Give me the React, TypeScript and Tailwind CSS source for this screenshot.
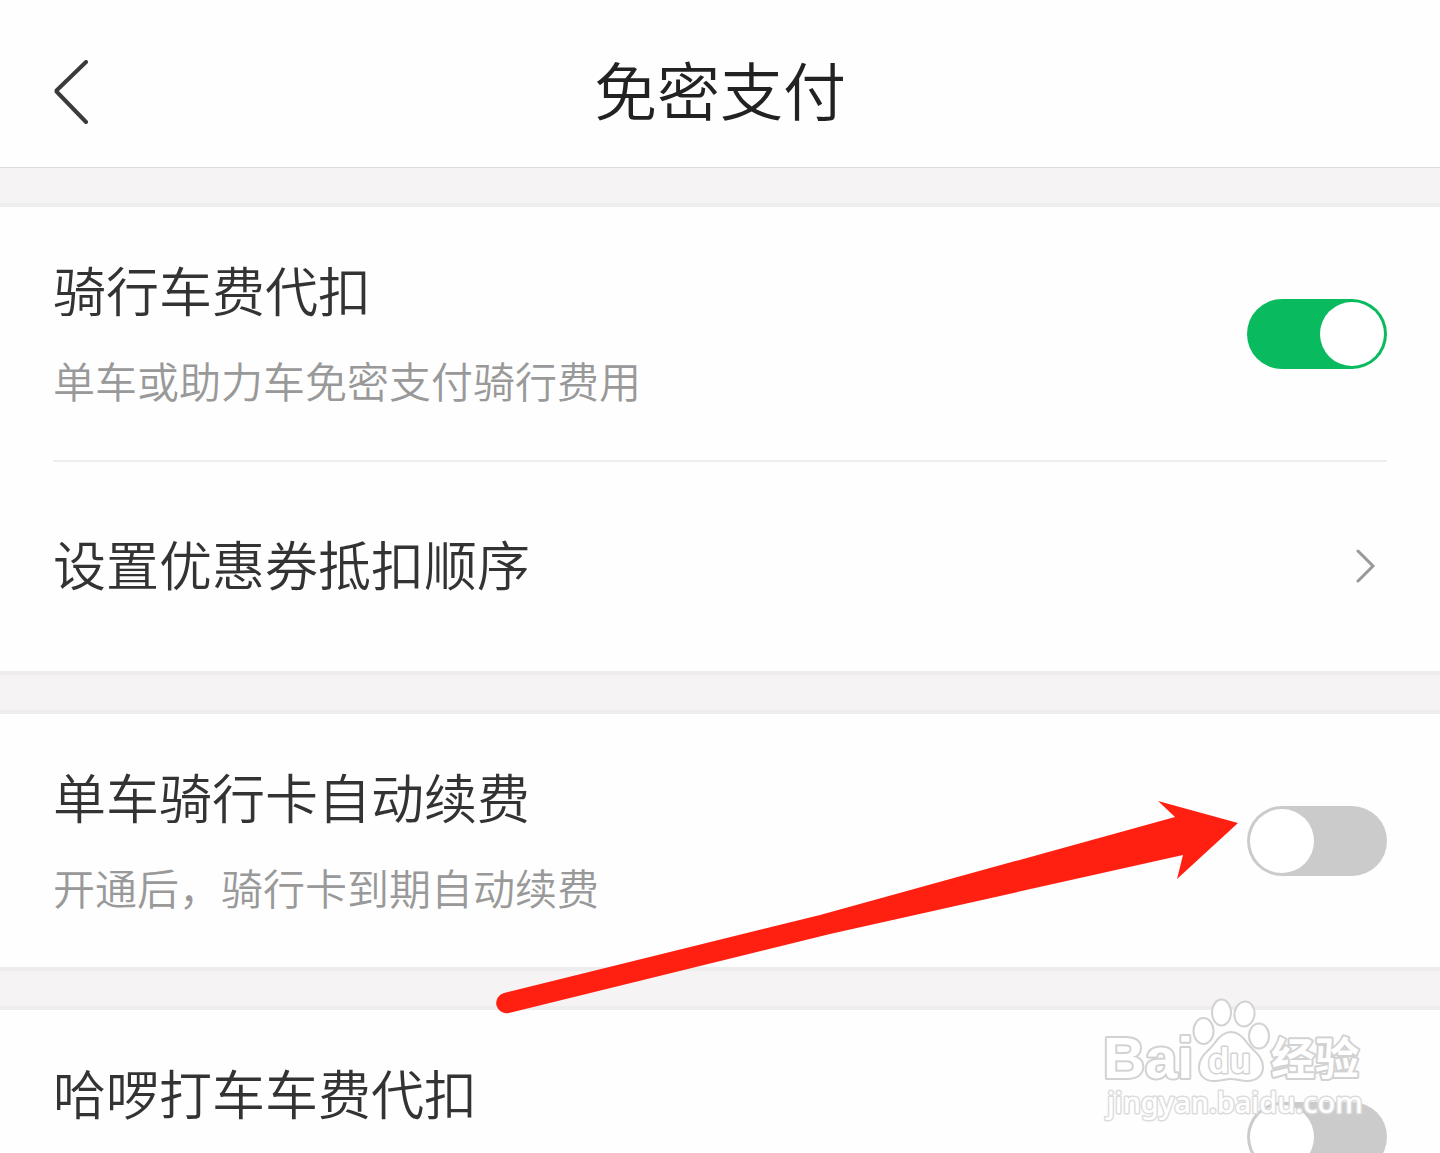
import { useState } from "react"

interface ToggleRowProps {
	id: string
	title: string
	description?: string
	defaultOn?: boolean
}

function ToggleRow({ id, title, description, defaultOn = false }: ToggleRowProps) {
	const [on, setOn] = useState(defaultOn)

	return (
		<div className="flex min-h-[253px] justify-between">
			<div className="flex flex-col gap-8 pt-[50px]">
				<label htmlFor={id} className="text-[53px] leading-[64px] text-[#333333]">
					{title}
				</label>
				{description && (
					<p id={`${id}-desc`} className="text-[42px] leading-[54px] text-[#999999]">
						{description}
					</p>
				)}
			</div>
			<input
				id={id}
				type="checkbox"
				role="switch"
				aria-describedby={description ? `${id}-desc` : undefined}
				checked={on}
				onChange={(e) => setOn(e.target.checked)}
				className="flex h-[70px] w-[140px] flex-shrink-0 cursor-pointer appearance-none items-center self-center rounded-full bg-[#cbcbcb] p-[3px] before:h-16 before:w-16 before:rounded-full before:bg-white before:content-[''] checked:justify-end checked:bg-[#09bb5e]"
			/>
		</div>
	)
}

function Divider() {
	return (
		<div className="h-[43px] flex-shrink-0 border-y-4 border-[#ededed] bg-[#f5f3f4]"></div>
	)
}

function PointerArrow() {
	return (
		<svg
			className="pointer-events-none absolute top-[800px] left-[496px] h-[216px] w-[744px]"
			viewBox="496 800 744 216"
			fill="#ff2012"
			aria-hidden="true"
		>
			<path d="M504 993 L820 915 L1175 817 L1158 801 L1238 823 L1177 879 L1183 855 L830 934 L509 1013 A10 10 0 0 1 504 993 Z" />
		</svg>
	)
}

function Watermark() {
	return (
		<svg
			className="pointer-events-none absolute top-[992px] right-[70px] h-[136px] w-[270px]"
			viewBox="1100 992 270 136"
			fill="#ffffff"
			stroke="#d2d2d2"
			strokeWidth="2"
			strokeLinejoin="round"
			role="img"
			aria-label="Baidu 经验"
		>
			<ellipse cx="1203.5" cy="1031" rx="10" ry="13" />
			<ellipse cx="1221.5" cy="1012.5" rx="9.5" ry="13" />
			<ellipse cx="1244.5" cy="1014" rx="10" ry="12.5" transform="rotate(8 1244.5 1014)" />
			<ellipse cx="1259" cy="1036" rx="10" ry="12.5" />
			<path d="M1231 1032 C1239 1032 1244 1038 1248 1044 C1253 1051 1263 1056 1263 1067 C1263 1077 1255 1081 1247 1081 C1241 1081 1237 1079 1231 1079 C1225 1079 1221 1081 1214 1081 C1205 1081 1199 1076 1199 1067 C1199 1056 1209 1051 1214 1044 C1218 1038 1223 1032 1231 1032 Z" />
			<g className="font-['Liberation_Sans',sans-serif] font-bold" paintOrder="stroke">
				<text x="1103" y="1078" fontSize="58" strokeWidth="4">
					Bai
				</text>
				<text x="1208" y="1073" fontSize="35" strokeWidth="3">
					du
				</text>
			</g>
			<text
				x="1271"
				y="1075"
				fontSize="44"
				strokeWidth="4"
				paintOrder="stroke"
				className="font-['Noto_Sans_CJK_SC',sans-serif] font-bold"
			>
				经验
			</text>
			<text
				x="1107"
				y="1113"
				fontSize="29"
				stroke="#dcdcdc"
				strokeWidth="3"
				paintOrder="stroke"
				className="font-['Noto_Sans',sans-serif] font-medium"
			>
				jingyan.baidu.com
			</text>
		</svg>
	)
}

export default function App() {
	return (
		<div className="relative flex h-screen flex-col overflow-hidden bg-[#fefefe] font-['Noto_Sans_CJK_SC',sans-serif] font-[350]">
			<header className="grid h-[168px] flex-shrink-0 grid-cols-[1fr_auto_1fr] items-center border-b border-[#dcdcdc] px-[53px] pt-4">
				<button type="button" aria-label="返回" className="w-9 cursor-pointer">
					<svg
						className="h-16 w-9"
						viewBox="0 0 36 64"
						fill="none"
						stroke="#3b3b3b"
						strokeWidth="4"
						strokeLinecap="round"
						strokeLinejoin="bevel"
					>
						<path d="M33 2 L3 31 L33 62" />
					</svg>
				</button>
				<h1 className="pb-2 text-[63px] leading-[76px] text-[#222222]">免密支付</h1>
			</header>

			<div className="h-[39px] flex-shrink-0 border-b-4 border-[#ededed] bg-[#f5f3f4]"></div>

			<section className="px-[53px]">
				<ToggleRow
					id="ride-fee"
					title="骑行车费代扣"
					description="单车或助力车免密支付骑行费用"
					defaultOn
				/>
				<a
					href="#coupon-order"
					className="flex h-[211px] items-center justify-between border-t-2 border-[#eeeeee] text-[53px] leading-[64px] text-[#333333]"
				>
					<span className="pb-2">设置优惠券抵扣顺序</span>
					<svg
						className="mr-2 h-9 w-6"
						viewBox="0 0 24 36"
						fill="none"
						stroke="#999999"
						strokeWidth="3"
						strokeLinecap="round"
						aria-hidden="true"
					>
						<path d="M3 2 L18 17 L3 32" />
					</svg>
				</a>
			</section>

			<Divider />

			<section className="px-[53px]">
				<ToggleRow
					id="card-renewal"
					title="单车骑行卡自动续费"
					description="开通后，骑行卡到期自动续费"
				/>
			</section>

			<Divider />

			<section className="px-[53px]">
				<ToggleRow id="taxi-fee" title="哈啰打车车费代扣" />
			</section>

			<PointerArrow />
			<Watermark />
		</div>
	)
}
